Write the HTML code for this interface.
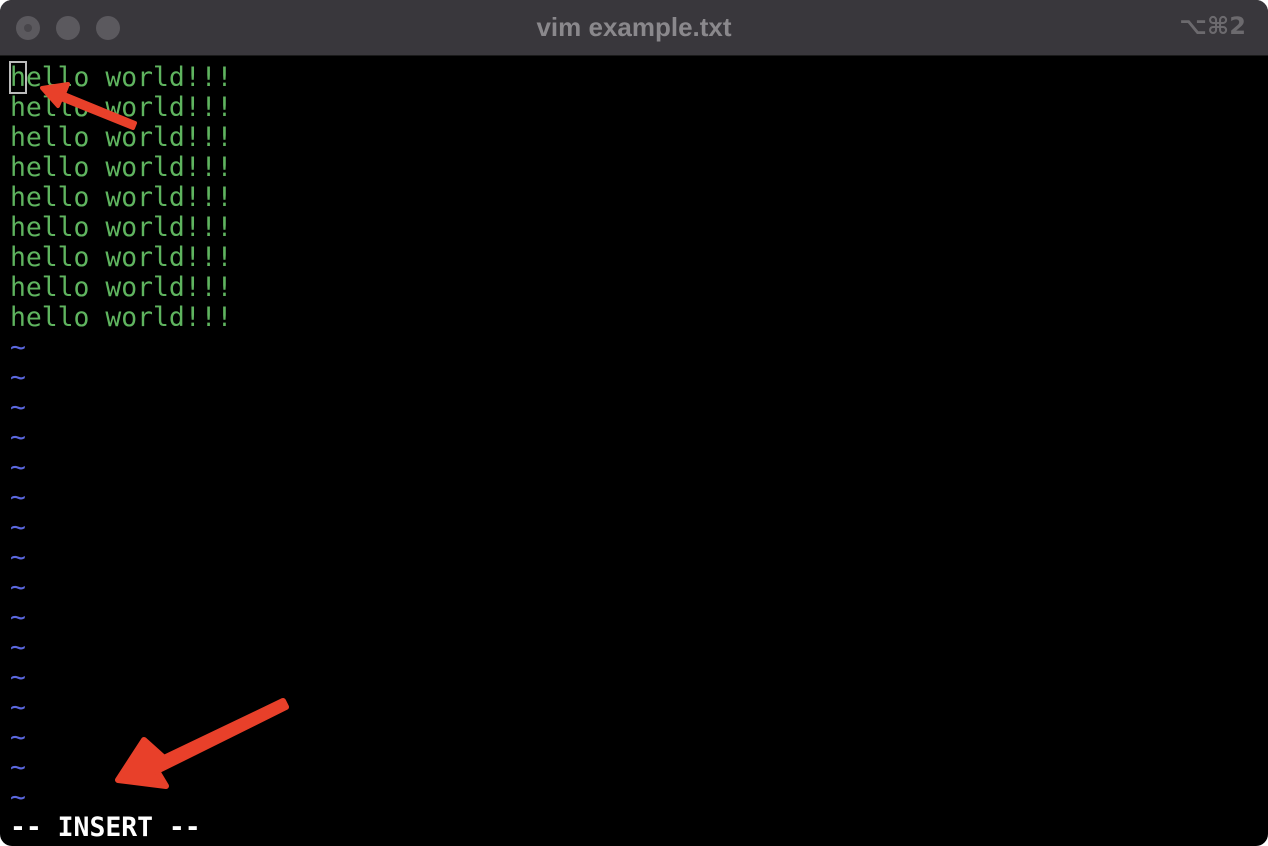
<!DOCTYPE html>
<html><head><style>
html,body{margin:0;padding:0;background:#fff;}
.win{position:absolute;left:0;top:0;width:1268px;height:846px;background:#000;border-radius:12px;overflow:hidden;}
.tb{position:absolute;left:0;top:0;width:1268px;height:55px;background:#39373c;border-bottom:1px solid #1a1a1a;}
.dot{position:absolute;top:16px;width:24px;height:24px;border-radius:50%;background:#5b595e;}
.title{position:absolute;left:0;right:0;top:12px;text-align:center;color:#8a888c;font:bold 26px "Liberation Sans",sans-serif;}
.sc{position:absolute;right:22px;top:12px;color:#6c6a6e;font:bold 24px "DejaVu Sans",sans-serif;}
.term{position:absolute;left:10px;top:63px;font:26.4px/30px "DejaVu Sans Mono",monospace;white-space:pre;}
.g{color:#5fb45f;}
.t{color:#5b68e0;}
.w{color:#fff;font-weight:bold;}
.cur{outline:2px solid #bbb;outline-offset:-1px;}
</style></head><body>
<div class="win">
<div class="tb">
<div class="dot" style="left:16px"><div style="position:absolute;left:8px;top:8px;width:8px;height:8px;border-radius:50%;background:#48464b"></div></div>
<div class="dot" style="left:56px"></div>
<div class="dot" style="left:96px"></div>
<div class="title">vim example.txt</div>
<div class="sc">⌥⌘2</div>
</div>
<div class="term"><span class="g"><span class="cur">h</span>ello world!!!
hello world!!!
hello world!!!
hello world!!!
hello world!!!
hello world!!!
hello world!!!
hello world!!!
hello world!!!</span>
<span class="t">~
~
~
~
~
~
~
~
~
~
~
~
~
~
~
~</span>
<span class="w">-- INSERT --</span></div>
<svg style="position:absolute;left:0;top:0" width="1268" height="846">
<path d="M135 123 L64 94 L68 84 L42 88 L58 106 L61 99 L133 128 Z" fill="#e8402a" stroke="#e8402a" stroke-width="4" stroke-linejoin="round"/>
<path d="M283 701 L164 758 L144 740 L118 780 L166 786 L157 771 L286 707 Z" fill="#e8402a" stroke="#e8402a" stroke-width="6" stroke-linejoin="round"/>
</svg>
</div>
</body></html>
